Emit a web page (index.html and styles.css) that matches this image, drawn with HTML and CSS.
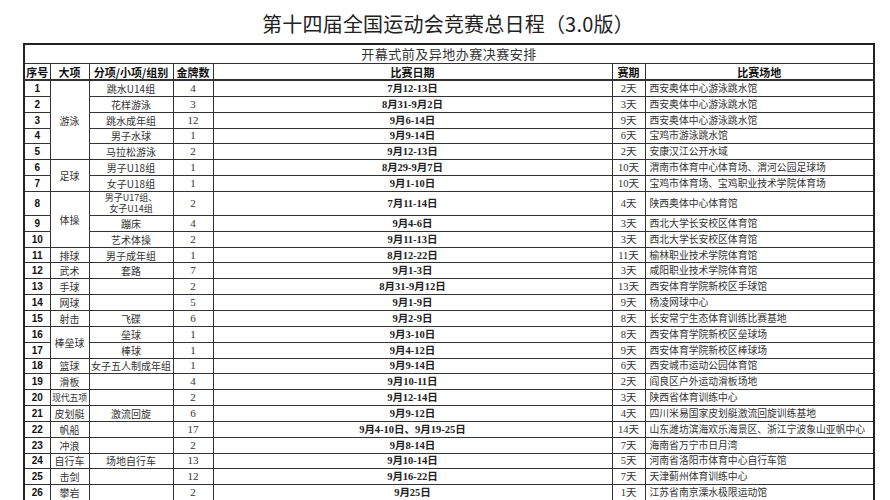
FILE: index.html
```html
<!DOCTYPE html>
<html lang="zh">
<head>
<meta charset="utf-8">
<title>第十四届全国运动会竞赛总日程</title>
<link rel="stylesheet" href="styles.css">
</head>
<body>
<h1 class="title">第十四届全国运动会竞赛总日程（3.0版）</h1>
<table class="sched">
  <colgroup>
    <col class="c-no"><col class="c-big"><col class="c-sub"><col class="c-gold"><col class="c-date"><col class="c-days"><col class="c-venue">
  </colgroup>
  <tr class="cap"><td colspan="7">开幕式前及异地办赛决赛安排</td></tr>
  <tr class="head"><th>序号</th><th>大项</th><th>分项/小项/组别</th><th>金牌数</th><th>比赛日期</th><th>赛期</th><th>比赛场地</th></tr>
  <tr><td class="no">1</td><td class="big" rowspan="5">游泳</td><td class="sub">跳水U14组</td><td class="gold">4</td><td class="date">7月12-13日</td><td class="days">2天</td><td class="venue">西安奥体中心游泳跳水馆</td></tr>
  <tr><td class="no">2</td><td class="sub">花样游泳</td><td class="gold">3</td><td class="date">8月31-9月2日</td><td class="days">3天</td><td class="venue">西安奥体中心游泳跳水馆</td></tr>
  <tr><td class="no">3</td><td class="sub">跳水成年组</td><td class="gold">12</td><td class="date">9月6-14日</td><td class="days">9天</td><td class="venue">西安奥体中心游泳跳水馆</td></tr>
  <tr><td class="no">4</td><td class="sub">男子水球</td><td class="gold">1</td><td class="date">9月9-14日</td><td class="days">6天</td><td class="venue">宝鸡市游泳跳水馆</td></tr>
  <tr><td class="no">5</td><td class="sub">马拉松游泳</td><td class="gold">2</td><td class="date">9月12-13日</td><td class="days">2天</td><td class="venue">安康汉江公开水域</td></tr>
  <tr><td class="no">6</td><td class="big" rowspan="2">足球</td><td class="sub">男子U18组</td><td class="gold">1</td><td class="date">8月29-9月7日</td><td class="days">10天</td><td class="venue">渭南市体育中心体育场、渭河公园足球场</td></tr>
  <tr><td class="no">7</td><td class="sub">女子U18组</td><td class="gold">1</td><td class="date">9月1-10日</td><td class="days">10天</td><td class="venue">宝鸡市体育场、宝鸡职业技术学院体育场</td></tr>
  <tr class="tall"><td class="no">8</td><td class="big" rowspan="3">体操</td><td class="sub two">男子U17组、<br>女子U14组</td><td class="gold">2</td><td class="date">7月11-14日</td><td class="days">4天</td><td class="venue">陕西奥体中心体育馆</td></tr>
  <tr><td class="no">9</td><td class="sub">蹦床</td><td class="gold">4</td><td class="date">9月4-6日</td><td class="days">3天</td><td class="venue">西北大学长安校区体育馆</td></tr>
  <tr><td class="no">10</td><td class="sub">艺术体操</td><td class="gold">2</td><td class="date">9月11-13日</td><td class="days">3天</td><td class="venue">西北大学长安校区体育馆</td></tr>
  <tr><td class="no">11</td><td class="big">排球</td><td class="sub">男子成年组</td><td class="gold">1</td><td class="date">8月12-22日</td><td class="days">11天</td><td class="venue">榆林职业技术学院体育馆</td></tr>
  <tr><td class="no">12</td><td class="big">武术</td><td class="sub">套路</td><td class="gold">7</td><td class="date">9月1-3日</td><td class="days">3天</td><td class="venue">咸阳职业技术学院体育馆</td></tr>
  <tr><td class="no">13</td><td class="big">手球</td><td class="sub"></td><td class="gold">2</td><td class="date">8月31-9月12日</td><td class="days">13天</td><td class="venue">西安体育学院新校区手球馆</td></tr>
  <tr><td class="no">14</td><td class="big">网球</td><td class="sub"></td><td class="gold">5</td><td class="date">9月1-9日</td><td class="days">9天</td><td class="venue">杨凌网球中心</td></tr>
  <tr><td class="no">15</td><td class="big">射击</td><td class="sub">飞碟</td><td class="gold">6</td><td class="date">9月2-9日</td><td class="days">8天</td><td class="venue">长安常宁生态体育训练比赛基地</td></tr>
  <tr><td class="no">16</td><td class="big" rowspan="2">棒垒球</td><td class="sub">垒球</td><td class="gold">1</td><td class="date">9月3-10日</td><td class="days">8天</td><td class="venue">西安体育学院新校区垒球场</td></tr>
  <tr><td class="no">17</td><td class="sub">棒球</td><td class="gold">1</td><td class="date">9月4-12日</td><td class="days">9天</td><td class="venue">西安体育学院新校区棒球场</td></tr>
  <tr><td class="no">18</td><td class="big">篮球</td><td class="sub">女子五人制成年组</td><td class="gold">1</td><td class="date">9月9-14日</td><td class="days">6天</td><td class="venue">西安城市运动公园体育馆</td></tr>
  <tr><td class="no">19</td><td class="big">滑板</td><td class="sub"></td><td class="gold">4</td><td class="date">9月10-11日</td><td class="days">2天</td><td class="venue">阎良区户外运动滑板场地</td></tr>
  <tr><td class="no">20</td><td class="big narrow">现代五项</td><td class="sub"></td><td class="gold">2</td><td class="date">9月12-14日</td><td class="days">3天</td><td class="venue">陕西省体育训练中心</td></tr>
  <tr><td class="no">21</td><td class="big">皮划艇</td><td class="sub">激流回旋</td><td class="gold">6</td><td class="date">9月9-12日</td><td class="days">4天</td><td class="venue">四川米易国家皮划艇激流回旋训练基地</td></tr>
  <tr><td class="no">22</td><td class="big">帆船</td><td class="sub"></td><td class="gold">17</td><td class="date">9月4-10日、9月19-25日</td><td class="days">14天</td><td class="venue">山东潍坊滨海欢乐海景区、浙江宁波象山亚帆中心</td></tr>
  <tr><td class="no">23</td><td class="big">冲浪</td><td class="sub"></td><td class="gold">2</td><td class="date">9月8-14日</td><td class="days">7天</td><td class="venue">海南省万宁市日月湾</td></tr>
  <tr><td class="no">24</td><td class="big">自行车</td><td class="sub">场地自行车</td><td class="gold">13</td><td class="date">9月10-14日</td><td class="days">5天</td><td class="venue">河南省洛阳市体育中心自行车馆</td></tr>
  <tr><td class="no">25</td><td class="big">击剑</td><td class="sub"></td><td class="gold">12</td><td class="date">9月16-22日</td><td class="days">7天</td><td class="venue">天津蓟州体育训练中心</td></tr>
  <tr><td class="no">26</td><td class="big">攀岩</td><td class="sub"></td><td class="gold">2</td><td class="date">9月25日</td><td class="days">1天</td><td class="venue">江苏省南京溧水极限运动馆</td></tr>
</table>
</body>
</html>
```
FILE: styles.css
```css
html, body {
  margin: 0;
  padding: 0;
  background: #fff;
}
body {
  font-family: "Noto Sans CJK SC", "Noto Sans", sans-serif;
  color: #2a2a2a;
  padding: 12px 17px 0 23px;
  overflow: hidden;
}
.title {
  margin: 0 0 8px 0;
  text-align: center;
  font-size: 20px;
  line-height: 23px;
  font-weight: normal;
  color: #222;
  letter-spacing: 0.2px;
}
.sched {
  border-collapse: collapse;
  table-layout: fixed;
  width: 850px;
  border: 2px solid #222;
}
.c-no { width: 26px; }
.c-big { width: 39px; }
.c-sub { width: 84px; }
.c-gold { width: 40px; }
.c-date { width: 399px; }
.c-days { width: 33px; }
.c-venue { width: 229px; }
.sched td, .sched th {
  border: 1px solid #333;
  padding: 0;
  height: 14.85px;
  font-size: 10px;
  line-height: 11px;
  text-align: center;
  white-space: nowrap;
  overflow: hidden;
}
.sched .cap td {
  height: 18px;
  font-size: 13px;
  line-height: 16px;
  letter-spacing: 0.5px;
  color: #333;
}
.sched .head th {
  height: 15px;
  font-size: 11px;
  line-height: 12px;
  font-weight: bold;
  color: #111;
  border-bottom-width: 2px;
}
.sched .tall td { height: 23px; }
.no {
  font-family: "Liberation Sans", Arial, sans-serif;
  font-weight: bold;
  font-size: 10.5px;
  color: #111;
}
.big { color: #333; }
.sched td.narrow { font-size: 9px; letter-spacing: -0.2px; }
.sub { color: #333; }
.sched td.two { line-height: 11.5px; font-size: 9px; white-space: normal; }
.gold {
  font-family: "Liberation Serif", "Noto Sans CJK SC", serif;
  color: #333;
}
.sched td.gold { font-size: 11px; }
.date {
  font-family: "Liberation Serif", "Noto Sans CJK SC", serif;
  font-weight: bold;
  color: #222;
}
.sched td.date { font-size: 10.5px; }
.days {
  font-family: "Liberation Serif", "Noto Sans CJK SC", serif;
  color: #333;
}
.sched td.days { font-size: 10.5px; }
.sched td.venue {
  text-align: left;
  padding-left: 4px;
  font-size: 9.8px;
  color: #333;
}
```
